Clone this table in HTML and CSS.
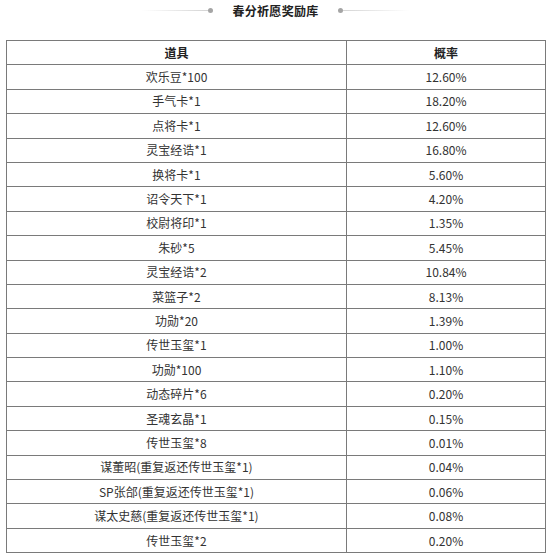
FILE: index.html
```html
<!DOCTYPE html>
<html lang="zh-CN">
<head>
    <meta charset="UTF-8">
    <title>春分祈愿奖励库</title>
    <link rel="stylesheet" href="styles.css">
</head>
<body>
    <div class="title-bar">
        <span class="deco deco-left"><i class="line"></i><i class="dot"></i></span>
        <h1>春分祈愿奖励库</h1>
        <span class="deco deco-right"><i class="dot"></i><i class="line"></i></span>
    </div>

    <table class="reward-table">
        <thead>
            <tr><th class="col-item">道具</th><th class="col-rate">概率</th></tr>
        </thead>
        <tbody>
            <tr><td>欢乐豆*100</td><td>12.60%</td></tr>
            <tr><td>手气卡*1</td><td>18.20%</td></tr>
            <tr><td>点将卡*1</td><td>12.60%</td></tr>
            <tr><td>灵宝经诰*1</td><td>16.80%</td></tr>
            <tr><td>换将卡*1</td><td>5.60%</td></tr>
            <tr><td>诏令天下*1</td><td>4.20%</td></tr>
            <tr><td>校尉将印*1</td><td>1.35%</td></tr>
            <tr><td>朱砂*5</td><td>5.45%</td></tr>
            <tr><td>灵宝经诰*2</td><td>10.84%</td></tr>
            <tr><td>菜篮子*2</td><td>8.13%</td></tr>
            <tr><td>功勋*20</td><td>1.39%</td></tr>
            <tr><td>传世玉玺*1</td><td>1.00%</td></tr>
            <tr><td>功勋*100</td><td>1.10%</td></tr>
            <tr><td>动态碎片*6</td><td>0.20%</td></tr>
            <tr><td>圣魂玄晶*1</td><td>0.15%</td></tr>
            <tr><td>传世玉玺*8</td><td>0.01%</td></tr>
            <tr><td>谋董昭(重复返还传世玉玺*1)</td><td>0.04%</td></tr>
            <tr><td>SP张郃(重复返还传世玉玺*1)</td><td>0.06%</td></tr>
            <tr><td>谋太史慈(重复返还传世玉玺*1)</td><td>0.08%</td></tr>
            <tr><td>传世玉玺*2</td><td>0.20%</td></tr>
        </tbody>
    </table>
</body>
</html>
```

FILE: styles.css
```css
body {
    margin: 0;
    padding: 0 6px;
    background: #fff;
    color: #333;
    font-family: "Microsoft YaHei", "Noto Sans CJK SC", sans-serif;
}
.title-bar {
    display: flex;
    justify-content: center;
    align-items: center;
    height: 21px;
    gap: 19px;
}
.title-bar h1 {
    margin: 0;
    font-size: 12px;
    font-weight: bold;
    letter-spacing: 0.3px;
    color: #222;
}
.deco {
    display: flex;
    align-items: center;
}
.deco .line {
    display: block;
    width: 66px;
    height: 1px;
}
.deco-left .line {
    background: linear-gradient(to right, rgba(200,200,200,0), #d4d4d4);
}
.deco-right .line {
    background: linear-gradient(to left, rgba(200,200,200,0), #d4d4d4);
}
.deco .dot {
    display: block;
    width: 5px;
    height: 5px;
    border-radius: 50%;
    background: #a5a5a5;
}
.reward-table {
    margin-top: 19px;
    width: 540px;
    border-collapse: collapse;
    font-size: 12px;
}
.reward-table th,
.reward-table td {
    border: 1px solid #7a7a7a;
    text-align: center;
    padding: 0;
    height: 23.4px;
    line-height: 14px;
}
.reward-table th {
    font-weight: bold;
    color: #222;
}
.col-item {
    width: 339px;
}
```
